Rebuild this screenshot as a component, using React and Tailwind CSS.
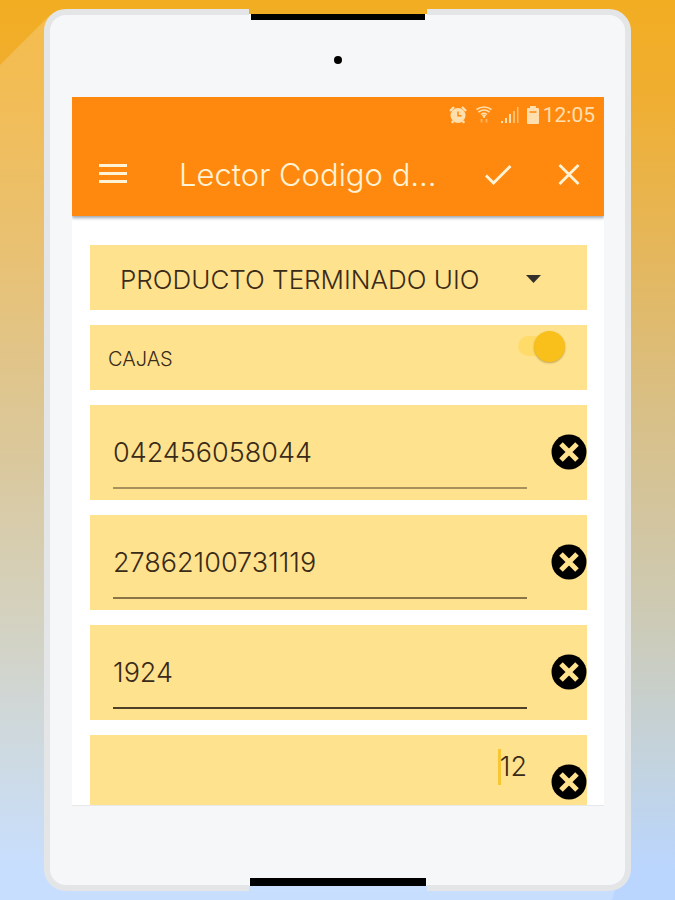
import React, { useState } from 'react';

const INITIAL_FIELDS = [
  { id: 'codigo', label: 'Codigo', value: '042456058044', line: 'border-[#a8905c]' },
  { id: 'lote', label: 'Lote', value: '27862100731119', line: 'border-[#8a7448]' },
  { id: 'orden', label: 'Orden', value: '1924', line: 'border-[#4f4027]' },
];

function StatusBar() {
  return (
    <div className="flex h-9 items-center justify-end gap-2 pr-[9px] text-[#ffdfae]">
      <svg className="h-[18px] w-[18px]" viewBox="0 0 18 18" aria-hidden="true">
        <path d="M1 5 5 1M13 1l4 4M4 15l-1 2M14 15l1 2" stroke="currentColor" strokeWidth="2.4" />
        <circle cx="9" cy="9.5" r="7.5" fill="currentColor" />
        <path d="M9 5.5v4.3h3.5" fill="none" stroke="#ff890f" strokeWidth="1.5" />
      </svg>
      <svg className="h-[18px] w-[18px]" viewBox="0 0 18 18" fill="none" stroke="currentColor" aria-hidden="true">
        <path d="M1.500 3.5q7.500-5 15 0M3.500 6q5.500-4 11 0M6 8.500q3-2.500 6 0" strokeWidth="1.6" />
        <path d="M7.500 9h3L9 12z" fill="currentColor" strokeWidth="1" />
        <path d="M6.5 13v3.500M11.5 13v3.500" strokeWidth="1.8" opacity="0.5" />
      </svg>
      <svg className="h-[18px] w-[18px]" viewBox="0 0 18 18" fill="currentColor" aria-hidden="true">
        <path d="M0 15h2v2H0zM4 12h2v5H4zM8 8h2v9H8z" />
        <path d="M12 5h2v12h-2zM16 1h1.5v16H16z" opacity="0.6" />
      </svg>
      <svg className="h-[18px] w-3" viewBox="0 0 12 18" aria-hidden="true">
        <path d="M3 0h6v2h2q1 0 1 1v14q0 1-1 1H1q-1 0-1-1V3q0-1 1-1h2z" fill="currentColor" />
        <path d="M2.5 6h7" stroke="#ff890f" strokeWidth="1.5" />
      </svg>
      <span className="-ml-1 font-['Roboto'] text-[21px] leading-6">12:05</span>
    </div>
  );
}

function Toolbar() {
  return (
    <header className="relative z-10 bg-[#ff890f] shadow-[0_2px_3px_rgba(60,80,100,0.5)]">
      <StatusBar />
      <div className="flex h-[83px] items-center pr-[19px] pl-[27px] text-[#fff3d6]">
        <button type="button" aria-label="Menu" className="shrink-0">
          <svg className="h-7 w-7" viewBox="0 0 28 28" stroke="currentColor" strokeWidth="3" aria-hidden="true">
            <path d="M0 4.500h28M0 12.500h28M0 20.500h28" />
          </svg>
        </button>
        <h1 className="ml-[52px] min-w-0 flex-1 truncate text-[31px] leading-10 font-light">Lector Codigo d...</h1>
        <button type="button" aria-label="Aceptar" className="shrink-0">
          <svg className="h-8 w-8" viewBox="0 0 32 32" fill="none" stroke="currentColor" strokeWidth="2.8" aria-hidden="true">
            <path d="m4 16.5 7.500 7.500L28.500 7" />
          </svg>
        </button>
        <button type="button" aria-label="Cerrar" className="ml-[39px] shrink-0">
          <svg className="h-8 w-8" viewBox="0 0 32 32" fill="none" stroke="currentColor" strokeWidth="2.8" aria-hidden="true">
            <path d="m6.500 6 19 19M25.500 6l-19 19" />
          </svg>
        </button>
      </div>
    </header>
  );
}

function ClearButton({ label, onClick }) {
  return (
    <button type="button" aria-label={label} onClick={onClick} className="shrink-0">
      <svg className="h-9 w-9" viewBox="0 0 36 36" aria-hidden="true">
        <circle cx="18" cy="18" r="17.500" fill="#000" />
        <path d="m10 10 16 16M26 10 10 26" stroke="#ffe28e" strokeWidth="5" />
      </svg>
    </button>
  );
}

function CodeField({ field, onChange }) {
  return (
    <div className="flex h-[95px] shrink-0 items-start bg-[#fee28d] pl-[23px]">
      <input
        type="text"
        aria-label={field.label}
        value={field.value}
        onChange={(e) => onChange(field.id, e.target.value)}
        className={`h-[84px] min-w-0 flex-1 border-b-2 ${field.line} bg-transparent pt-3 text-[27px] font-light text-[#3a2a18] outline-none`}
      />
      <div className="mt-[29px] ml-6 flex">
        <ClearButton label={`Borrar ${field.label}`} onClick={() => onChange(field.id, '')} />
      </div>
    </div>
  );
}

function App() {
  const [fields, setFields] = useState(INITIAL_FIELDS);
  const [cajas, setCajas] = useState(true);
  const [cantidad, setCantidad] = useState('12');

  const updateField = (id, value) => {
    setFields((prev) => prev.map((f) => (f.id === id ? { ...f, value } : f)));
  };

  return (
    <div className="relative min-h-screen overflow-hidden bg-[linear-gradient(to_bottom,#f2ad22_0%,#f0ae30_10%,#d9bf85_45%,#cdcab4_68%,#c3d3df_85%,#bad6ff_97%)] px-11 pt-[9px] pb-[9px] font-['Inter',sans-serif]">
      {/* light cast from the top left corner of the tablet */}
      <div className="absolute inset-0 bg-linear-to-b from-white/20 via-white/10 to-white/20 [clip-path:polygon(0_65px,50px_15px,100px_100px,calc(100%-50px)_95%,calc(100%-63px)_100%,0_100%)]" />
      <div className="relative flex h-[calc(100vh-18px)] flex-col rounded-[22px] border-[6px] border-[#e4e5e7] bg-[#f5f7f9] pr-[21px] pl-[22px]">
        <div className="absolute -top-[6px] left-1/2 h-[12px] w-[178px] -translate-x-1/2 bg-[#f5f7f9]">
          <div className="h-[5px] bg-[#f0ad24]" />
          <div className="mx-[2px] h-[6px] bg-black" />
        </div>
        <div className="flex h-[82px] shrink-0 items-center justify-center pt-2">
          <div className="h-2 w-2 rounded-full bg-black" />
        </div>

        <main className="flex min-h-0 flex-1 flex-col overflow-hidden border-b border-[#e6e8ea] bg-white">
          <Toolbar />
          <div className="flex min-h-0 flex-1 flex-col gap-[15px] overflow-hidden pt-[29px] pr-[17px] pl-[18px]">
            <div className="relative shrink-0 bg-[#fee28d]">
              <select
                aria-label="Bodega"
                className="h-[65px] w-full appearance-none bg-transparent pt-1 pr-20 pl-[30px] text-[26px] font-light text-[#3a2a18] outline-none"
              >
                <option>PRODUCTO TERMINADO UIO</option>
              </select>
              <svg className="pointer-events-none absolute top-[30px] right-[46px] h-2 w-[15px]" viewBox="0 0 15 8" aria-hidden="true">
                <path d="M0 0h15L7.500 8z" fill="#33302b" />
              </svg>
            </div>

            <label className="flex h-[65px] shrink-0 items-start justify-between bg-[#fee28d] pr-[21px] pl-[18px]">
              <span className="pt-5 text-[20px] leading-7 font-light text-[#3a2a18]">CAJAS</span>
              <input
                type="checkbox"
                role="switch"
                checked={cajas}
                onChange={(e) => setCajas(e.target.checked)}
                className="mt-[5px] flex h-8 w-12 appearance-none items-center rounded-full before:h-5 before:w-8 before:rounded-full before:bg-[#ffdc69] after:-ml-4 after:h-[31px] after:w-[31px] after:rounded-full after:bg-[#f9c01b] after:shadow-[0_1px_2px_rgba(100,70,0,0.4)]"
              />
            </label>

            {fields.map((field) => (
              <CodeField key={field.id} field={field} onChange={updateField} />
            ))}

            <div className="flex h-[95px] shrink-0 items-start bg-[#fee28d] pl-[23px]">
              <div className="flex min-w-0 flex-1 items-center justify-end pt-[14px]">
                <span className="-mr-px h-9 w-[3px] bg-[#f9c633]" />
                <input
                  type="text"
                  aria-label="Cantidad"
                  value={cantidad}
                  onChange={(e) => setCantidad(e.target.value)}
                  className="h-9 max-w-full [field-sizing:content] bg-transparent text-right text-[27px] font-light text-[#3a2a18] outline-none"
                />
              </div>
              <div className="mt-[29px] ml-6 flex">
                <ClearButton label="Borrar Cantidad" onClick={() => setCantidad('')} />
              </div>
            </div>
          </div>
        </main>

        <div className="h-[79px] shrink-0" />
        <div className="absolute -bottom-[6px] left-1/2 h-[13px] w-[178px] -translate-x-1/2 bg-[#f5f7f9]">
          <div className="mx-[1px] h-[8px] bg-black" />
          <div className="h-[5px] bg-[#c9dfff]" />
        </div>
      </div>
    </div>
  );
}

export default App;
